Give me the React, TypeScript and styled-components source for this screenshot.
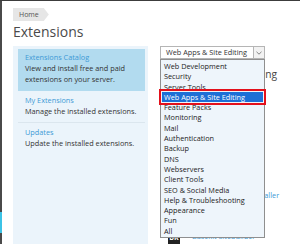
import styled, { createGlobalStyle } from 'styled-components';

const GlobalStyle = createGlobalStyle`
  html, body {
    margin: 0;
    padding: 0;
    background: #ffffff;
    font-family: "Open Sans", "DejaVu Sans", sans-serif;
    color: #333333;
  }
`;

const categories = [
  'Web Development',
  'Security',
  'Server Tools',
  'Web Apps & Site Editing',
  'Feature Packs',
  'Monitoring',
  'Mail',
  'Authentication',
  'Backup',
  'DNS',
  'Webservers',
  'Client Tools',
  'SEO & Social Media',
  'Help & Troubleshooting',
  'Appearance',
  'Fun',
  'All',
];

const selected = 'Web Apps & Site Editing';

const navItems = [
  { title: 'Extensions Catalog', text: 'View and install free and paid extensions on your server.', active: true },
  { title: 'My Extensions', text: 'Manage the installed extensions.', active: false },
  { title: 'Updates', text: 'Update the installed extensions.', active: false },
];

function App() {
  return (
    <>
      <GlobalStyle />
      <Frame>
        <Edge>
          <EdgePart $color="#4a4a4a" $size={211} />
          <EdgePart $color="#3cc3e6" $size={21} />
          <EdgePart $color="#4a4a4a" $size={12} />
        </Edge>
        <Page>
          <Crumb>Home</Crumb>
          <Title>Extensions</Title>
          <Columns>
            <Sidebar>
              {navItems.map((item, i) => (
                <NavItem key={item.title} $active={item.active} $last={i === navItems.length - 1}>
                  <NavLink>{item.title}</NavLink>
                  <NavText>{item.text}</NavText>
                </NavItem>
              ))}
            </Sidebar>
            <Main>
              <Select>
                <SelectValue>{selected}</SelectValue>
                <SelectArrow>
                  <svg width="6" height="4" viewBox="0 0 6 4">
                    <path d="M0.5 0.8 L3 3.2 L5.5 0.8" fill="none" stroke="#777" strokeWidth="0.9" />
                  </svg>
                </SelectArrow>
              </Select>
              <SectionTitle>Web Apps &amp; Site Editing</SectionTitle>
              <Spacer />
              <InstallerLink>WordPress Toolkit Installer</InstallerLink>
              <ExtensionRow>
                <ExtIcon>BK</ExtIcon>
                <ExtName>Baseklt Sitebuilder</ExtName>
              </ExtensionRow>
              <DropList>
                {categories.map((c) => (
                  <DropItem key={c} $selected={c === selected}>
                    {c}
                  </DropItem>
                ))}
              </DropList>
            </Main>
          </Columns>
        </Page>
      </Frame>
    </>
  );
}

const Frame = styled.div`
  display: flex;
  width: 300px;
  height: 244px;
  box-sizing: border-box;
  border-top: 1px solid #3c3c3c;
  overflow: hidden;
`;

const Edge = styled.div`
  display: flex;
  flex-direction: column;
  width: 2px;
  flex: none;
`;

const EdgePart = styled.div<{ $color: string; $size: number }>`
  height: ${(p) => p.$size}px;
  background: ${(p) => p.$color};
  flex: none;
`;

const Page = styled.div`
  flex: 1;
  display: flex;
  flex-direction: column;
  padding: 7px 0 0 11px;
  min-width: 0;
`;

const Crumb = styled.div`
  align-self: flex-start;
  height: 13px;
  line-height: 13px;
  padding: 0 10px 0 6px;
  font-size: 7px;
  color: #555555;
  background: #e6e6e6;
  clip-path: polygon(0 0, calc(100% - 5px) 0, 100% 50%, calc(100% - 5px) 100%, 0 100%);
`;

const Title = styled.h1`
  margin: 1px 0 0 0;
  font-size: 14px;
  line-height: 20px;
  font-weight: 400;
  color: #4a4a4a;
`;

const Columns = styled.div`
  display: flex;
  gap: 12px;
  margin-top: 4px;
  flex: 1;
  min-height: 0;
`;

const Sidebar = styled.div`
  width: 135px;
  flex: none;
  background: #ebf4fb;
  padding: 3px 3px 0 5px;
  box-sizing: border-box;
`;

const NavItem = styled.div<{ $active: boolean; $last: boolean }>`
  padding: 3px 4px 5px 7px;
  background: ${(p) => (p.$active ? '#b2dbef' : 'transparent')};
  border-bottom: 1px solid ${(p) => (p.$last || p.$active ? 'transparent' : '#dbe6ee')};
  & + & {
    margin-top: 1px;
  }
`;

const NavLink = styled.div`
  font-size: 7.3px;
  line-height: 11px;
  color: #3d9ad6;
`;

const NavText = styled.div`
  font-size: 7.3px;
  line-height: 11px;
  color: #333333;
`;

const Main = styled.div`
  position: relative;
  flex: 1;
  display: flex;
  flex-direction: column;
`;

const Select = styled.div`
  display: flex;
  width: 105px;
  height: 13px;
  box-sizing: border-box;
  border: 1px solid #b5b5b5;
  background: #ffffff;
`;

const SelectValue = styled.div`
  flex: 1;
  font-size: 7.3px;
  line-height: 11px;
  padding-left: 5px;
  color: #333333;
  white-space: nowrap;
`;

const SelectArrow = styled.div`
  width: 10px;
  display: flex;
  align-items: center;
  justify-content: center;
  border-left: 1px solid #b5b5b5;
  background: #f2f2f2;
`;

const SectionTitle = styled.div`
  margin-top: 8px;
  padding-left: 4px;
  font-size: 10.2px;
  line-height: 14px;
  color: #444444;
  white-space: nowrap;
`;

const Spacer = styled.div`
  height: 111px;
`;

const InstallerLink = styled.div`
  font-size: 7.3px;
  line-height: 11px;
  color: #3d9ad6;
  white-space: nowrap;
  padding-left: 28px;
`;

const ExtensionRow = styled.div`
  display: flex;
  align-items: flex-start;
  gap: 12px;
  margin-top: 31px;
  padding-left: 8px;
`;

const ExtIcon = styled.div`
  width: 12px;
  height: 12px;
  flex: none;
  background: #222222;
  color: #ffffff;
  font-size: 7px;
  font-weight: 700;
  line-height: 12px;
  text-align: center;
`;

const ExtName = styled.div`
  font-size: 7.3px;
  line-height: 8px;
  color: #3d9ad6;
  white-space: nowrap;
`;

const DropList = styled.div`
  position: absolute;
  top: 13px;
  left: 0;
  width: 105px;
  box-sizing: border-box;
  padding: 1px;
  border: 1px solid #8f8f8f;
  background: #eef5fb;
`;

const DropItem = styled.div<{ $selected: boolean }>`
  height: 10.3px;
  line-height: 10.3px;
  font-size: 7.3px;
  padding-left: 2px;
  white-space: nowrap;
  color: ${(p) => (p.$selected ? '#ffffff' : '#222222')};
  background: ${(p) => (p.$selected ? '#1d6fd6' : 'transparent')};
  outline: ${(p) => (p.$selected ? '2px solid #e3101b' : 'none')};
  outline-offset: 1px;
`;

export default App;
